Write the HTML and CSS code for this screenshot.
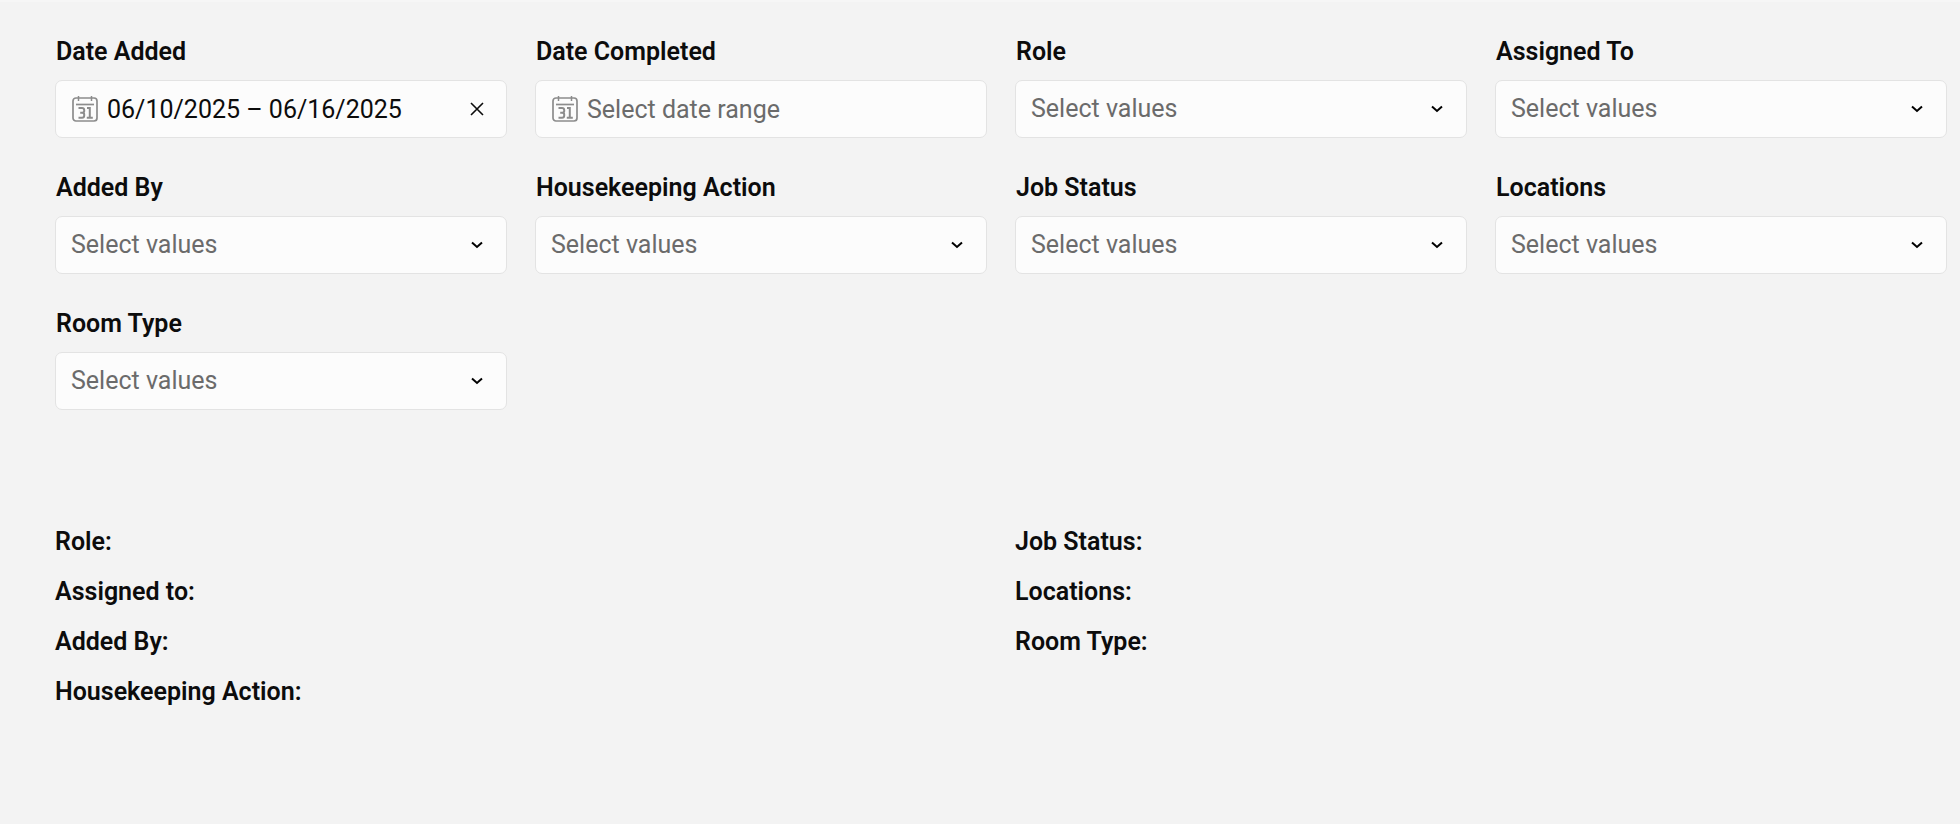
FILE: index.html
```html
<!DOCTYPE html>
<html lang="en">
<head>
<meta charset="utf-8">
<title>Housekeeping filters</title>
<link rel="stylesheet" href="styles.css">
</head>
<body>
<svg class="sprite" aria-hidden="true">
  <symbol id="calendar" viewBox="0 0 26 26">
    <g fill="none" stroke="currentColor">
      <rect x="1" y="2" width="24" height="23" rx="3" stroke-width="1.700"/>
      <path d="M6.500 0v5M19.500 0v5" stroke-width="1.500"/>
      <path d="M4 8.500h18" stroke-width="1.700"/>
      <path d="M6.500 12h3.500q2.200 0 2.200 2v1q0 1.800-2 1.800H8.200M10.200 16.800q2 0 2 1.800v1q0 2.200-2.200 2.200H6.500M15 12h2.800v9.800M14.800 21.800h6" stroke-width="2"/>
    </g>
  </symbol>
  <symbol id="chevron" viewBox="0 0 12 8">
    <path d="M1 1.500l5 4.500 5-4.500" fill="none" stroke="currentColor" stroke-width="2"/>
  </symbol>
  <symbol id="close" viewBox="0 0 14 14">
    <path d="M1 1l12 12M13 1L1 13" fill="none" stroke="currentColor" stroke-width="1.600"/>
  </symbol>
</svg>
<main class="page">
  <form class="filters">
    <div class="field">
      <label class="field-label" for="date-added">Date Added</label>
      <div class="control">
        <svg class="calendar"><use href="#calendar"/></svg>
        <input class="date" id="date-added" type="text" placeholder="Select date range" value="06/10/2025 – 06/16/2025">
        <button class="clear" type="button" aria-label="Clear date added"><svg class="close"><use href="#close"/></svg></button>
      </div>
    </div>
    <div class="field">
      <label class="field-label" for="date-completed">Date Completed</label>
      <div class="control">
        <svg class="calendar"><use href="#calendar"/></svg>
        <input class="date" id="date-completed" type="text" placeholder="Select date range">
      </div>
    </div>
    <div class="field">
      <label class="field-label" for="role">Role</label>
      <div class="control">
        <select class="select" id="role"><option>Select values</option></select>
        <svg class="chevron"><use href="#chevron"/></svg>
      </div>
    </div>
    <div class="field">
      <label class="field-label" for="assigned-to">Assigned To</label>
      <div class="control">
        <select class="select" id="assigned-to"><option>Select values</option></select>
        <svg class="chevron"><use href="#chevron"/></svg>
      </div>
    </div>
    <div class="field">
      <label class="field-label" for="added-by">Added By</label>
      <div class="control">
        <select class="select" id="added-by"><option>Select values</option></select>
        <svg class="chevron"><use href="#chevron"/></svg>
      </div>
    </div>
    <div class="field">
      <label class="field-label" for="action">Housekeeping Action</label>
      <div class="control">
        <select class="select" id="action"><option>Select values</option></select>
        <svg class="chevron"><use href="#chevron"/></svg>
      </div>
    </div>
    <div class="field">
      <label class="field-label" for="job-status">Job Status</label>
      <div class="control">
        <select class="select" id="job-status"><option>Select values</option></select>
        <svg class="chevron"><use href="#chevron"/></svg>
      </div>
    </div>
    <div class="field">
      <label class="field-label" for="locations">Locations</label>
      <div class="control">
        <select class="select" id="locations"><option>Select values</option></select>
        <svg class="chevron"><use href="#chevron"/></svg>
      </div>
    </div>
    <div class="field">
      <label class="field-label" for="room-type">Room Type</label>
      <div class="control">
        <select class="select" id="room-type"><option>Select values</option></select>
        <svg class="chevron"><use href="#chevron"/></svg>
      </div>
    </div>
  </form>
  <section class="summary">
    <div class="summary-column">
      <p class="summary-item">Role:</p>
      <p class="summary-item">Assigned to:</p>
      <p class="summary-item">Added By:</p>
      <p class="summary-item">Housekeeping Action:</p>
    </div>
    <div class="summary-column">
      <p class="summary-item">Job Status:</p>
      <p class="summary-item">Locations:</p>
      <p class="summary-item">Room Type:</p>
    </div>
  </section>
</main>
</body>
</html>
```

FILE: styles.css
```css
* { box-sizing: border-box; }

body {
  margin: 0;
  min-height: 100vh;
  border-top: 2px solid #f6f6f6;
  background: #f3f3f3;
  color: #0c0c0c;
  font: 400 25px/30px Roboto, sans-serif;
}

.sprite { display: none; }

.page { padding: 35px 13px 40px 55px; }

.filters {
  display: grid;
  grid-template-columns: repeat(4, minmax(0, 1fr));
  gap: 35px 28px;
}

.field {
  display: flex;
  flex-direction: column;
  gap: 13px;
}

.field-label {
  padding-left: 1px;
  font-weight: 600;
}

.control {
  position: relative;
  display: flex;
  align-items: center;
  height: 58px;
  border: 1px solid #e3e3e3;
  border-radius: 7px;
  background: #fcfcfc;
}

.date,
.select {
  flex: 1;
  min-width: 0;
  height: 100%;
  margin: 0;
  border: 0;
  background: none;
  font: inherit;
  outline: 0;
}

.date {
  padding: 0 0 0 9px;
  color: #0c0c0c;
}

.date::placeholder { color: #6b6b6b; opacity: 1; }

.select {
  appearance: none;
  padding: 0 56px 0 15px;
  border-radius: 7px;
  color: #6b6b6b;
}

.calendar {
  flex: none;
  width: 26px;
  height: 26px;
  margin-left: 16px;
  color: #8c8c8c;
}

.chevron {
  position: absolute;
  right: 23px;
  width: 12px;
  height: 8px;
  color: #000;
  pointer-events: none;
}

.clear {
  display: flex;
  align-items: center;
  justify-content: center;
  width: 30px;
  height: 30px;
  margin-right: 14px;
  padding: 0;
  border: 0;
  background: none;
  color: #0c0c0c;
}

.close { width: 14px; height: 14px; }

.summary {
  display: grid;
  grid-template-columns: repeat(2, minmax(0, 1fr));
  column-gap: 28px;
  margin-top: 117px;
}

.summary-column {
  display: flex;
  flex-direction: column;
  gap: 20px;
}

.summary-item {
  margin: 0;
  font-weight: 600;
}
```
